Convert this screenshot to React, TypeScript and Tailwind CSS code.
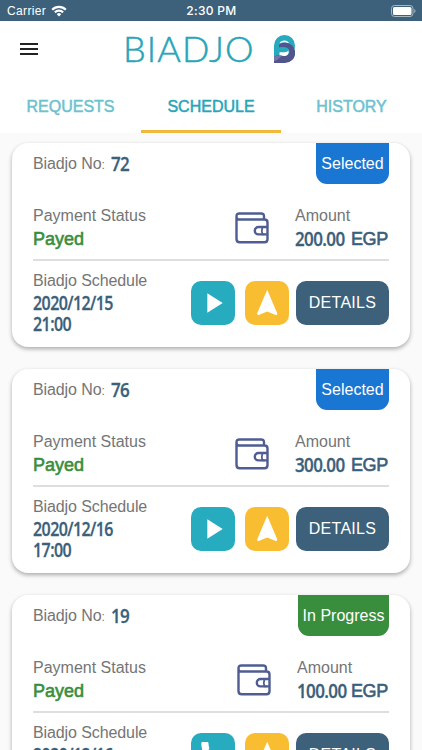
import React from "react";

type Trip = {
  no: string;
  status: string;
  badge: string;
  badgeWidth: string;
  amount: string;
  amountWidth: string;
  date: string;
  time: string;
  action: "play" | "phone";
};

const trips: Trip[] = [
  { no: "72", status: "Selected", badge: "bg-[#1976d2]", badgeWidth: "w-[73px]", amount: "200.00", amountWidth: "w-[94px]", date: "2020/12/15", time: "21:00", action: "play" },
  { no: "76", status: "Selected", badge: "bg-[#1976d2]", badgeWidth: "w-[73px]", amount: "300.00", amountWidth: "w-[94px]", date: "2020/12/16", time: "17:00", action: "play" },
  { no: "19", status: "In Progress", badge: "bg-[#388e3c]", badgeWidth: "w-[91px]", amount: "100.00", amountWidth: "w-[92px]", date: "2020/12/16", time: "17:00", action: "phone" },
];

const numeral =
  "inline-block origin-left whitespace-nowrap font-['Open_Sans',sans-serif] text-[19.5px] font-semibold tracking-[-0.7px] text-[#3b607a] [-webkit-text-stroke:0.3px_#3b607a]";

function Wallet() {
  return (
    <svg width="34" height="32" viewBox="0 0 34 32" fill="none" stroke="#4f5d92" strokeWidth="2.4">
      <path d="M29 7.500V4.500Q29 1.500 26 1.500H4.500Q1.500 1.500 1.500 4.500V27Q1.500 30.300 4.800 30.300H29.500Q32.500 30.300 32.500 27.300V10.500Q32.500 7.500 29.500 7.500H4.500Q1.500 7.500 1.500 4.500" />
      <path d="M32.500 15H23.500a3.700 3.700 0 0 0 0 7.400H32.500" />
      <path d="M29.500 15H27.500q-1.400 3.700 0 7.400h2" strokeWidth="1.800" />
    </svg>
  );
}

function PlayIcon() {
  return (
    <svg width="44" height="44" viewBox="0 0 44 44" fill="#fff">
      <path d="M16.300 12.300v19.400L31.700 22z" />
    </svg>
  );
}

function PhoneIcon() {
  return (
    <svg width="44" height="44" viewBox="0 0 44 44" fill="#fff">
      <path d="M15.200 19.200c1.900 3.700 4.900 6.700 8.600 8.600l2.900-2.900c.4-.4.9-.5 1.300-.3 1.500.5 3.100.8 4.700.8.700 0 1.300.6 1.300 1.300v4.600c0 .7-.6 1.300-1.300 1.300C20.300 32.600 10.300 22.600 10.300 10.300c0-.7.6-1.300 1.300-1.300h4.600c.7 0 1.300.6 1.300 1.300 0 1.600.3 3.200.8 4.700.1.400 0 .9-.3 1.300z" />
    </svg>
  );
}

function ArrowIcon() {
  return (
    <svg width="44" height="44" viewBox="0 0 44 44" fill="#fff">
      <path d="M22.200 8.700l10.200 24-1.100 1.500-9.100-3.800-9.100 3.800-1.100-1.500z" />
    </svg>
  );
}

function TripCard({ trip }: { trip: Trip }) {
  return (
    <article className="flex h-[204px] shrink-0 flex-col rounded-[16px] bg-white px-[21px] shadow-[0_2px_4px_rgba(0,0,0,0.32)]">
      <div className="flex h-[61px] items-start justify-between">
        <div className="flex h-[42px] items-center text-[16px] text-[#757575]">
          <span className="w-[78px] whitespace-nowrap tracking-[-0.1px]">
            Biadjo No<span className="text-[12px]">:</span>
          </span>
          <span className={`${numeral} scale-x-[0.87]`}>{trip.no}</span>
        </div>
        <div className={`flex h-[41px] items-center justify-center rounded-b-[11px] text-[16px] text-white ${trip.badge} ${trip.badgeWidth}`}>
          {trip.status}
        </div>
      </div>

      <div className="flex h-[55px] justify-between">
        <div className="flex flex-col">
          <span className="text-[16px] leading-[24px] text-[#757575]">Payment Status</span>
          <span className="text-[18px] leading-[22px] text-[#388e3c] [-webkit-text-stroke:0.6px_#388e3c]">Payed</span>
        </div>
        <div className="flex gap-[26px]">
          <div className="pt-[7.5px]">
            <Wallet />
          </div>
          <div className={`flex flex-col ${trip.amountWidth}`}>
            <span className="text-[16px] leading-[24px] text-[#757575]">Amount</span>
            <span className="flex justify-between text-[18px] leading-[22px] text-[#3b607a]">
              <span className="w-[50px]">
                <span className={`${numeral} scale-x-[0.87] leading-[22px]`}>{trip.amount}</span>
              </span>
              <span className="pr-[1px] tracking-[-0.3px] [-webkit-text-stroke:0.6px_#3b607a]">EGP</span>
            </span>
          </div>
        </div>
      </div>

      <div className="h-[2px] bg-[#dedede]" />

      <div className="flex justify-between pt-[8px]">
        <div className="flex w-[130px] flex-col">
          <span className="text-[16px] leading-[23px] tracking-[-0.1px] text-[#757575]">Biadjo Schedule</span>
          <span className={`${numeral} scale-x-[0.82] leading-[21px]`}>{trip.date}</span>
          <span className={`${numeral} scale-x-[0.82] leading-[21px]`}>{trip.time}</span>
        </div>
        <div className="flex pt-[11.5px]">
          <button className="mr-[10px] size-[44px] rounded-[10px] bg-[#26abbf]">
            {trip.action === "play" ? <PlayIcon /> : <PhoneIcon />}
          </button>
          <button className="mr-[7px] size-[44px] rounded-[10px] bg-[#f9bd32]">
            <ArrowIcon />
          </button>
          <button className="h-[44px] w-[93px] rounded-[10px] bg-[#3d617a] text-[16px] tracking-[0.3px] text-white">DETAILS</button>
        </div>
      </div>
    </article>
  );
}

function StatusBar() {
  return (
    <div className="flex h-[21px] shrink-0 items-center justify-between bg-[#3d617a] pr-[6px] pl-[7px] text-white">
      <div className="flex w-[100px] items-center gap-[5px] text-[12px] tracking-[0.35px]">
        <span>Carrier</span>
        <svg width="16" height="12" viewBox="0 0 16 12" fill="none" stroke="#fff" strokeWidth="2.200">
          <path d="M1.200 4.700a9.600 9.600 0 0 1 13.600 0M3.900 7.400a5.800 5.800 0 0 1 8.200 0" />
          <path d="M8 11.500L5.800 9.200a3.100 3.100 0 0 1 4.400 0z" fill="#fff" stroke="none" />
        </svg>
      </div>
      <span className="font-['Inter',sans-serif] text-[12px] font-medium tracking-[0.3px]">2:30 PM</span>
      <div className="flex w-[100px] justify-end">
        <svg width="25" height="12" viewBox="0 0 25 12">
          <rect x="0.500" y="0.500" width="21.500" height="11" rx="3" fill="none" stroke="#a8b8c3" />
          <rect x="2" y="2" width="18.500" height="8" rx="1.500" fill="#fff" />
          <path d="M23.300 4v4q1.200-.6 1.200-2t-1.200-2" fill="#a8b8c3" />
        </svg>
      </div>
    </div>
  );
}

function LogoMark() {
  return (
    <svg width="21" height="28" viewBox="0 0 21 28">
      <path d="M0 24V10.500a10.500 10.500 0 0 1 21 0q0 6-5 9.500H5v4z" fill="#27aabd" />
      <path d="M5.500 8.300Q7 5.500 10.500 5.500T15.500 9Q10 6.500 5.500 8.300z" fill="#fff" />
      <path d="M5 9.700Q7.500 7.600 11 7.600A10.200 10.200 0 0 1 11 28H0V21.500Q5 19.500 10 21Q15 20.500 15.500 17Q15.500 11.500 5 12.500z" fill="#50558d" />
      <path d="M5.500 12.200H10Q15 12.500 15 15.500T9.500 18.500H5.500z" fill="#27aabd" />
      <path d="M5.500 17.300H10.500Q13.500 17 14.500 15.500Q15.500 21 9.500 20.700Q7 20.300 5.500 20.300z" fill="#fff" />
      <path d="M0 21.500Q4 20 8.500 20.600L2.500 25.500L0 26z" fill="#7774a7" />
    </svg>
  );
}

export default function App() {
  return (
    <div className="flex h-[750px] w-[422px] flex-col overflow-hidden bg-[#fafafa] font-['Liberation_Sans',sans-serif]">
      <StatusBar />
      <header className="flex h-[60px] shrink-0 items-center bg-white pb-[4px] pl-[20px]">
        <button className="flex w-[18px] flex-col gap-[3px]" aria-label="Menu">
          <span className="h-[2px] bg-[#222]" />
          <span className="h-[2px] bg-[#222]" />
          <span className="h-[2px] bg-[#222]" />
        </button>
        <h1 className="ml-[85px] w-[151px] whitespace-nowrap pb-[2px] font-['Lato',sans-serif] text-[36px] font-light tracking-[1.1px] text-[#27a5b9] [-webkit-text-stroke:0.5px_#27a5b9]">
          BIADJO
        </h1>
        <LogoMark />
      </header>
      <nav className="grid h-[52px] shrink-0 grid-cols-[141px_140px_141px] bg-white text-[16px]">
        <span className="flex items-center justify-center text-[#6cc2cf] [-webkit-text-stroke:0.5px_#6cc2cf]">REQUESTS</span>
        <span className="flex items-center justify-center border-b-[3px] border-[#f0b93c] pt-[3px] text-[#27a5b9] [-webkit-text-stroke:0.5px_#27a5b9]">
          SCHEDULE
        </span>
        <span className="flex items-center justify-center text-[#6cc2cf] [-webkit-text-stroke:0.5px_#6cc2cf]">HISTORY</span>
      </nav>
      <main className="flex flex-col gap-[22px] px-[12px] pt-[10px]">
        {trips.map((trip) => (
          <TripCard key={trip.no} trip={trip} />
        ))}
      </main>
    </div>
  );
}
